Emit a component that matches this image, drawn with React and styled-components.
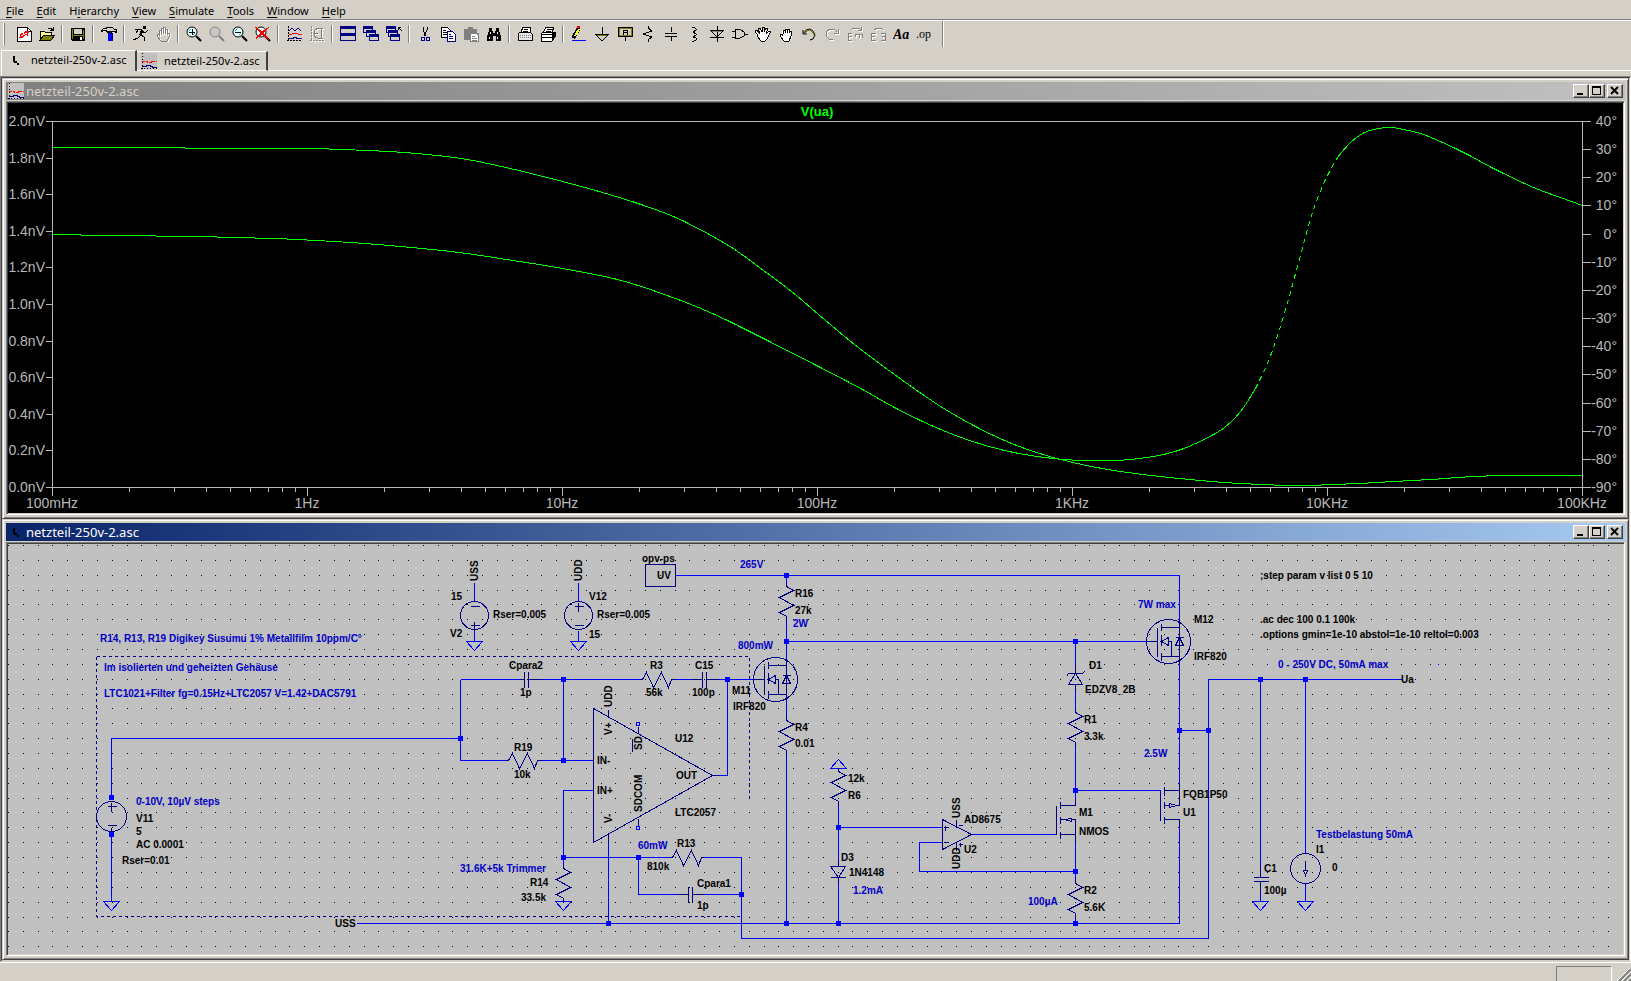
import React from 'react';
import styled, { createGlobalStyle, css } from 'styled-components';

const GlobalStyle = createGlobalStyle`
  * {
    box-sizing: border-box;
  }

  body {
    margin: 0;
    background: #d4d0c8;
    font-family: 'Noto Sans', 'Open Sans', sans-serif;
    font-size: 11px;
    color: #000;
  }
`;

// Frame
const Page = styled.div`
  display: flex;
  flex-direction: column;
  min-height: 100vh;
`;

const MenuBar = styled.nav`
  display: flex;
  gap: 13px;
  height: 21px;
  padding: 2px 6px 0;
  border-bottom: 1px solid #fff;
  box-shadow: inset 0 -1px 0 #808080;
`;

const MenuItem = styled.button`
  height: 17px;
  padding: 0;
  border: 0;
  background: none;
  font: inherit;
  line-height: 17px;

  u {
    text-underline-offset: 2px;
  }
`;

const ToolBar = styled.div`
  display: flex;
  align-items: center;
  height: 28px;
  padding: 0 0 2px 3px;
`;

const Grip = styled.span`
  width: 2px;
  height: 22px;
  margin-right: 7px;
  border-left: 1px solid #fff;
  border-right: 1px solid #808080;
`;

const ToolButton = styled.button`
  display: flex;
  align-items: center;
  justify-content: center;
  width: 23px;
  height: 22px;
  padding: 0;
  border: 0;
  background: none;
`;

const Separator = styled.span`
  width: 2px;
  height: 18px;
  margin: 0 3px;
  border-left: 1px solid #808080;
  border-right: 1px solid #fff;
`;

const ToolBarEnd = styled.span`
  align-self: stretch;
  width: 2px;
  margin-left: 7px;
  border-left: 1px solid #808080;
  border-right: 1px solid #fff;
`;

const TabStrip = styled.div`
  display: flex;
  align-items: flex-end;
  height: 27px;
  padding: 1px 0 5px;
  margin-left: 1px;
  border-left: 1px solid #fff;
`;

const Tab = styled.button`
  display: flex;
  align-items: center;
  gap: 7px;
  width: 131px;
  height: 20px;
  padding: 0 0 1px 4px;
  border: 0;
  border-top: 1px solid #fff;
  border-right: 2px solid #404040;
  border-bottom: 1px solid #fff;
  background: none;
  font: inherit;

  ${({ $active }) =>
    $active &&
    css`
      width: 135px;
      height: 21px;
      padding: 0 0 3px 6px;
      border-bottom: 0;
    `}
`;

const TabFiller = styled.span`
  flex: 1;
  border-bottom: 1px solid #fff;
`;

const Workspace = styled.main`
  flex: 1;
  display: flex;
  flex-direction: column;
  padding: 1px;
  border: 1px solid;
  border-color: #808080 #fff #d4d0c8 #808080;
  box-shadow: inset 1px 1px 0 #404040;
`;

// Child windows
const ChildWindow = styled.section`
  flex: 1;
  display: flex;
  flex-direction: column;
  padding: 3px;
  border: 1px solid;
  border-color: #d4d0c8 #404040 #404040 #d4d0c8;
  box-shadow: inset 1px 1px 0 #fff, inset -1px -1px 0 #808080;
  background: #d4d0c8;
`;

const TitleBar = styled.header`
  display: flex;
  align-items: center;
  gap: 2px;
  height: 18px;
  padding: 0 2px;
  margin-bottom: 1px;
  color: ${({ $active }) => ($active ? '#fff' : '#d4d0c8')};
  background: ${({ $active }) =>
    $active
      ? 'linear-gradient(to right, #0a246a, #a6caf0)'
      : 'linear-gradient(to right, #808080, #c0c0c0)'};
`;

const TitleText = styled.h2`
  flex: 1;
  margin: 0;
  font-size: 13px;
  font-weight: 400;
  line-height: 18px;
`;

const CaptionButton = styled.button`
  display: flex;
  align-items: center;
  justify-content: center;
  width: 16px;
  height: 14px;
  padding: 0;
  margin-left: ${({ $spaced }) => ($spaced ? '0' : '-2px')};
  border: 1px solid;
  border-color: #fff #404040 #404040 #fff;
  box-shadow: inset -1px -1px 0 #808080;
  background: #d4d0c8;
`;

const WindowBody = styled.div`
  flex: 1;
  display: flex;
  padding: 1px;
  border: 1px solid;
  border-color: #808080 #fff #fff #808080;
  background: ${({ $color }) => $color};
  box-shadow: inset 1px 1px 0 #404040, inset -1px -1px 0 #d4d0c8;
`;

const Drawing = styled.svg`
  display: block;
  width: 100%;
  height: auto;
  shape-rendering: crispEdges;
`;

const StatusBar = styled.footer`
  display: flex;
  justify-content: flex-end;
  height: 20px;
  border-top: 1px solid #fff;
  padding: 3px 0 0;
`;

const StatusCell = styled.span`
  width: 56px;
  margin-right: 5px;
  border: 1px solid;
  border-color: #808080 #fff #d4d0c8 #808080;
`;

// Text in the drawings
const AxisText = styled.text`
  font-family: 'Liberation Sans', Arial, sans-serif;
  font-size: 14px;
  fill: #b8b8b8;
`;

const TraceName = styled(AxisText)`
  font-size: 13px;
  font-weight: 700;
  fill: #00ff00;
`;

const Label = styled.text`
  font-family: 'Liberation Sans', Arial, sans-serif;
  font-size: 10px;
  font-weight: 700;
  fill: ${({ $note }) => ($note ? '#0000c8' : '#000')};
`;

const Svg16 = styled.svg`
  display: block;
  flex: none;
  fill: none;
  stroke: #000;
  shape-rendering: crispEdges;
`;

const Icon = ({ children, ...rest }) => (
  <Svg16 width="16" height="16" viewBox="0 0 16 16" aria-hidden="true" {...rest}>
    {children}
  </Svg16>
);

const Fill = ({ d, c = '#000' }) => <path d={d} fill={c} stroke="none" />;

// Grey glyph with a white shadow, for commands that are not available
const Disabled = ({ children }) => (
  <>
    <g stroke="#fff" transform="translate(1 1)">{children}</g>
    <g stroke="#808080">{children}</g>
  </>
);

const Lens = ({ grey }) => (
  <g shapeRendering="auto">
    <circle cx="6" cy="6" r="5" fill={grey ? '#c8c8c8' : '#e8ffff'} stroke={grey ? '#808080' : '#000'} />
    <path d="M10 10L15 15" strokeWidth="2" stroke={grey ? '#808080' : '#000'} />
    {!grey && <path d="M3 5L5 3M7 9L9 7" stroke="#00c8c8" />}
  </g>
);

const CascadeBox = ({ x, y }) => (
  <g>
    <Fill d={`M${x} ${y}h10v7h-10z`} c="#000080" />
    <Fill d={`M${x + 1} ${y + 3}h8v3h-8z`} c="#d4d0c8" />
  </g>
);

const waveLines = (
  <>
    <path d="M2 0V14M1 14H16" strokeDasharray="2 1" />
    <path d="M3 5L6 2L9 5L12 2L15 5" stroke="#000080" />
    <path d="M3 8H6L8 7H10L12 8H16" stroke="#f00" />
    <path d="M3 12H7V11H10V12H16" stroke="#000080" />
  </>
);

const icons = {
  'New Schematic': (
    <>
      <Fill d="M1 1h11l3 3v11H1z" c="#fff" />
      <path d="M1 1H11L15 5V15H1zM11 1V5H15" />
      <Fill d="M3 12L5 7L8 8L9 5L13 5L12 10L9 9L7 12z" c="#f00" />
      <path d="M5 10L11 7" stroke="#fff" />
    </>
  ),
  Open: (
    <>
      <Fill d="M1 5h4l1 1h6v3H5l-4 5z" c="#ffff80" />
      <Fill d="M5 9h11l-4 5H1z" c="#808000" />
      <path d="M1 14V5H5L6 6H12V9M1 14L5 9H16L12 14zM9 3L11 2L14 4M14 1V4H11" />
    </>
  ),
  Save: (
    <>
      <Fill d="M1 2h14v13H2l-1-1z" />
      <Fill d="M2 3h1v10h-1zM13 4h1v9h-1zM3 9h10v1H3z" c="#808000" />
      <Fill d="M4 3h8v5H4z" c="#d4d0c8" />
      <Fill d="M10 11h2v3h-2z" c="#fff" />
    </>
  ),
  'Control Panel': (
    <>
      <Fill d="M0 4l2-2h2l1-1h6l2 2h3v4h-2l-1-1h-2l-1 1H6L5 5H2L1 6H0z" />
      <Fill d="M2 3h3l1-1h5l2 2h2v1h-2l-2 0H6L5 4H2z" c="#d4d0c8" />
      <Fill d="M7 7h4v8H7z" c="#0000ff" />
      <path d="M11 7V15M7 7V10" stroke="#000080" />
    </>
  ),
  Run: (
    <>
      <Fill d="M11 0h3v3h-3z" />
      <path d="M3 3H8L11 5L9 9L12 11V15M9 9L6 12L1 14M10 5L13 7L16 4M6 4L4 7" />
      <path d="M10 4L8 9" strokeWidth="2" />
    </>
  ),
  Halt: (
    <Disabled>
      <path d="M4 10V4H6V9V2H8V8V1H10V8V3H12V9L13 7H14V11L12 15H6L2 10V8H4" />
    </Disabled>
  ),
  'Zoom to Area': (
    <>
      <Lens />
      <path d="M3 6H9M6 3V9" />
    </>
  ),
  Pan: <Lens grey />,
  'Zoom Back': (
    <>
      <Lens />
      <path d="M3 6H9" />
    </>
  ),
  'Zoom Full Extents': (
    <>
      <Lens />
      <path d="M0 1L14 14M14 1L1 13" stroke="#f00" />
      <path d="M1 1L13 12M12 2L1 12" stroke="#f00" />
    </>
  ),
  'Autorange y-axis': waveLines,
  'Autorange traces': (
    <Disabled>
      <path d="M2 0V14M1 14H16" strokeDasharray="2 1" />
      <path d="M14 2H9L5 5V10L8 12H14M12 2V12M4 7H9" />
    </Disabled>
  ),
  Tile: (
    <>
      <Fill d="M0 0h16v15H0z" c="#000080" />
      <Fill d="M1 3h14v4H1zM1 10h14v4H1z" c="#d4d0c8" />
    </>
  ),
  Cascade: (
    <>
      <CascadeBox x={0} y={0} />
      <CascadeBox x={3} y={4} />
      <CascadeBox x={6} y={8} />
    </>
  ),
  'Close All': (
    <>
      <CascadeBox x={0} y={0} />
      <CascadeBox x={2} y={4} />
      <CascadeBox x={4} y={8} />
      <path d="M16 5L12 1M12 4V1H15" />
    </>
  ),
  Cut: (
    <>
      <path d="M6 1V4L9 10M10 1V4L7 10" />
      <path d="M4 11H7V14H4zM9 11H12V14H9z" stroke="#000080" />
    </>
  ),
  Copy: (
    <>
      <Fill d="M1 1h7l2 2v8H1z" c="#fff" />
      <path d="M1 1H7L10 4V11H1zM3 4H6M3 6H8M3 8H8" />
      <Fill d="M7 5h5l3 3v7H7z" c="#fff" />
      <path d="M7 5H12L15 8V15H7zM9 8H11M9 10H13M9 12H13" stroke="#000080" />
    </>
  ),
  Paste: (
    <>
      <Fill d="M1 3h4V1h5v2h4v4h2v9H7v-2H1z" c="#808080" />
      <Fill d="M8 8h5l2 2v5H8z" c="#fff" />
      <path d="M9 10H12M9 12H14M9 14H14" stroke="#808080" />
    </>
  ),
  Find: (
    <>
      <Fill d="M3 2h3v3h1v2h2V5h1V2h3v3l2 5v5h-5v-5H7v5H1v-5l2-5z" />
      <path d="M4 6V8M11 6V8M3 11V13M11 11V13" stroke="#fff" />
    </>
  ),
  Print: (
    <>
      <Fill d="M4 1h9v6H4z" c="#fff" />
      <path d="M4 6L6 1H13V6M7 3H11M6 5H11" />
      <Fill d="M1 7l2-1h11l1 2v6H1z" c="#e8e8e8" />
      <path d="M3 9H14M3 11H14" stroke="#808080" strokeDasharray="1 1" />
      <path d="M1 8L3 6H13L15 8V14H1z" />
    </>
  ),
  'Print Setup': (
    <>
      <Fill d="M5 1h8l-2 6H3z" c="#fff" />
      <path d="M3 7L6 1H14L12 6M7 3H12M6 5H11" />
      <Fill d="M1 8l3-2h11v5l-3 4H1z" c="#fff" />
      <path d="M1 8L3 6H15V11L12 15H1zM1 8H12V15M12 8L15 6M1 11H12" />
      <path d="M12 10L15 8M12 13L15 10" strokeWidth="2" />
    </>
  ),
  Wire: (
    <>
      <path d="M2 12L8 2" strokeWidth="4" />
      <path d="M4 10L8 3" stroke="#ffff00" strokeWidth="2" />
      <Fill d="M6 0h3v2H6z" c="#f00" />
      <path d="M1 14H15" stroke="#0000ff" />
    </>
  ),
  Ground: (
    <>
      <path d="M8 1V8M1 8H15L8 15z" />
      <path d="M3 9H13" stroke="#808000" />
    </>
  ),
  'Label Net': (
    <>
      <path d="M1 1H15V10H1zM8 10V15" />
      <path d="M2 2H14V9H2z" stroke="#808000" />
      <path d="M6 9V4H10V9M6 6H10" />
    </>
  ),
  Resistor: <path d="M8 0V2L12 5L3 8L12 11L8 14V16" />,
  Capacitor: (
    <>
      <path d="M8 1V6M8 10V15" />
      <path d="M2 7H14M2 10H14" />
    </>
  ),
  Inductor: <path d="M6 1H8L10 3V4L7 6L10 8V9L7 11L10 12V14L8 15H6" />,
  Diode: (
    <>
      <path d="M8 0V16M1 4H15L8 11zM1 11H15" />
      <path d="M3 5H13" stroke="#808080" />
    </>
  ),
  Component: <path d="M3 3H8L12 6V10L8 12H3zM0 5H3M0 11H3M12 8H16" />,
  Move: (
    <>
      <Fill d="M1 4h2l2 3V2h2l1 4 2-5h2l-1 5 3-2 2 1-4 7-3 4H6L1 9z" c="#fff" />
      <path d="M1 4H2L5 8L3 2H5L7 6L7 1H9L9 6L11 2H13L11 8L14 5H16L12 13L10 15H6L2 10V8L0 6z" />
    </>
  ),
  Drag: (
    <>
      <Fill d="M4 4h9v3h1v5l-3 4H6L2 10V8h2z" c="#fff" />
      <path d="M5 8V4H7V7V3H9V7V3H11V7V5H13V10L11 15H6L2 10V8H4L5 10" />
    </>
  ),
  Undo: (
    <>
      <path d="M2 4V8H6M3 7L5 4L9 3L12 5L14 9L12 13L9 14" shapeRendering="auto" />
      <path d="M4 7L6 5L9 4L12 7L13 9" stroke="#808000" shapeRendering="auto" />
    </>
  ),
  Redo: (
    <Disabled>
      <path d="M14 3V7H10M13 6L10 3H6L2 6V10L5 13H9" />
    </Disabled>
  ),
  Mirror: (
    <Disabled>
      <path d="M4 4L6 2H12L14 4M14 1V4H11M5 7H1V14H5M1 10H5M8 8V11M8 8H15V12M12 8V12" />
    </Disabled>
  ),
  Rotate: (
    <Disabled>
      <path d="M4 4L7 2H11L13 4M6 7H1V14H6M1 10H5M11 7H15V14H11M12 10H15" />
    </Disabled>
  ),
  Text: (
    <text x="0" y="13" fill="#000" stroke="none" fontFamily="Liberation Serif, serif" fontSize="14" fontStyle="italic" fontWeight="700">
      Aa
    </text>
  ),
  'SPICE Directive': (
    <text x="0" y="12" fill="#000" stroke="none" fontFamily="Liberation Serif, serif" fontSize="12">
      .op
    </text>
  ),
};

const toolGroups = [
  ['New Schematic', 'Open'],
  ['Save'],
  ['Control Panel'],
  ['Run', 'Halt'],
  ['Zoom to Area', 'Pan', 'Zoom Back', 'Zoom Full Extents'],
  ['Autorange y-axis', 'Autorange traces'],
  ['Tile', 'Cascade', 'Close All'],
  ['Cut', 'Copy', 'Paste', 'Find'],
  ['Print', 'Print Setup'],
  ['Wire', 'Ground', 'Label Net', 'Resistor', 'Capacitor', 'Inductor', 'Diode', 'Component', 'Move', 'Drag', 'Undo', 'Redo', 'Mirror', 'Rotate', 'Text', 'SPICE Directive'],
];

const menus = [
  ['', 'F', 'ile'],
  ['', 'E', 'dit'],
  ['H', 'i', 'erarchy'],
  ['', 'V', 'iew'],
  ['', 'S', 'imulate'],
  ['', 'T', 'ools'],
  ['', 'W', 'indow'],
  ['', 'H', 'elp'],
];

const SchematicIcon = () => (
  <Icon>
    <Fill d="M5 4h2v6H5zM6 9h3v2H6zM9 11h2v2H9z" />
  </Icon>
);

const PlotIcon = () => (
  <Icon>
    <Fill d="M0 0h16v16H0z" c="#c0c0c0" />
    <path d="M1 0V16M0 15H16" strokeDasharray="1 2" />
    <path d="M1 8H6V9H10V8H16" stroke="#f00" strokeDasharray="3 1" />
    <path d="M1 13H5V12H9V13H11V14H16" stroke="#000080" />
  </Icon>
);

// Waveform viewer
const PLOT = { left: 44, right: 1574, top: 18, bottom: 384 };
const DECADE = 255;
const freqs = ['100mHz', '1Hz', '10Hz', '100Hz', '1KHz', '10KHz', '100KHz'];
const volts = ['2.0nV', '1.8nV', '1.6nV', '1.4nV', '1.2nV', '1.0nV', '0.8nV', '0.6nV', '0.4nV', '0.2nV', '0.0nV'];
const degrees = [40, 30, 20, 10, 0, -10, -20, -30, -40, -50, -60, -70, -80, -90];

const magnitude = [
  [44, 44], [283, 45], [332, 46], [380, 48], [419, 51], [459, 56], [506, 66], [554, 78], [601, 91],
  [644, 105], [676, 118], [720, 142], [751, 164], [783, 188], [810, 211], [846, 241],
  [886, 271], [929, 301], [965, 322], [996, 337], [1028, 349], [1060, 358], [1099, 366], [1143, 372],
  [1192, 377], [1232, 380], [1289, 382], [1349, 380], [1385, 378], [1422, 376],
  [1465, 373], [1499, 372], [1574, 372],
];

const phaseLow = [
  [44, 131], [100, 132], [184, 133], [265, 135], [308, 137], [356, 140], [403, 144], [451, 149],
  [498, 156], [554, 165], [609, 176], [656, 191], [704, 210], [751, 233], [810, 263], [854, 286],
  [886, 304], [925, 323], [961, 337], [996, 347], [1036, 354], [1071, 357], [1107, 357], [1131, 355],
  [1155, 351], [1178, 344], [1207, 330], [1222, 319], [1235, 304], [1247, 285],
];

const phaseSteep = [
  [1247, 285], [1259, 260], [1269, 232], [1279, 199], [1289, 163], [1299, 126], [1306, 103],
  [1317, 76], [1329, 54],
];

const phaseHigh = [
  [1329, 54], [1342, 39], [1354, 30], [1365, 26], [1382, 24], [1395, 26], [1412, 30], [1432, 38],
  [1459, 51], [1485, 65], [1525, 84], [1552, 94], [1574, 102],
];

// Catmull-Rom through the points
const smooth = (pts) => {
  let d = `M${pts[0].join(' ')}`;
  for (let i = 0; i < pts.length - 1; i++) {
    const a = pts[i - 1] || pts[i];
    const b = pts[i];
    const c = pts[i + 1];
    const e = pts[i + 2] || c;
    d += `C${b[0] + (c[0] - a[0]) / 6} ${b[1] + (c[1] - a[1]) / 6} ${c[0] - (e[0] - b[0]) / 6} ${c[1] - (e[1] - b[1]) / 6} ${c[0]} ${c[1]}`;
  }
  return d;
};

const axisPath = () => {
  const { left, right, top, bottom } = PLOT;
  let d = `M${left} ${top}V${bottom + 8}M${right} ${top}V${bottom + 8}M${left} ${top}H${right}M${left} ${bottom}H${right}`;
  volts.forEach((_, i) => {
    d += `M${left - 7} ${Math.round(top + (i * (bottom - top)) / 10)}h7`;
  });
  degrees.forEach((_, i) => {
    d += `M${right} ${Math.round(top + (i * (bottom - top)) / 13)}h8`;
  });
  freqs.forEach((_, i) => {
    const x = left + i * DECADE;
    d += `M${x} ${bottom}v8`;
    if (i < freqs.length - 1) {
      for (let n = 2; n < 10; n++) {
        d += `M${Math.round(x + Math.log10(n) * DECADE)} ${bottom}v4`;
      }
    }
  });
  return d;
};

// Strokes run through pixel centres
const PIXEL_CENTRE = 'translate(0.5 0.5)';

const Waveform = () => (
  <Drawing viewBox="0 0 1615 410" role="img" aria-label="V(ua) over frequency">
    <path d={axisPath()} fill="none" stroke="#b8b8b8" transform={PIXEL_CENTRE} />
    <TraceName x="809" y="13" textAnchor="middle">V(ua)</TraceName>
    {volts.map((v, i) => (
      <AxisText key={v} x="37" y={Math.round(23 + i * 36.6)} textAnchor="end">{v}</AxisText>
    ))}
    {degrees.map((v, i) => (
      <AxisText key={v} x="1609" y={Math.round(23 + (i * 366) / 13)} textAnchor="end">{v}°</AxisText>
    ))}
    {freqs.map((f, i) => (
      <AxisText key={f} x={44 + i * DECADE} y="405" textAnchor="middle">{f}</AxisText>
    ))}
    <g fill="none" stroke="#00ff00" transform={PIXEL_CENTRE}>
      <path d={smooth(magnitude)} />
      <path d={smooth(phaseLow)} />
      <path d={smooth(phaseSteep)} strokeDasharray="5 4" />
      <path d={smooth(phaseHigh)} />
    </g>
  </Drawing>
);

// Schematic
const SHEET = { x: 8, y: 544, width: 1615, height: 410 };

const gridPath = () => {
  let d = '';
  for (let row = 0; row < 28; row++) {
    for (let col = 0; col < 109; col++) {
      d += `M${Math.round(8 + col * 14.815)} ${Math.round(545 + row * 14.86)}h1v1h-1z`;
    }
  }
  return d;
};

const wires = [
  'M675 575H1179V783',
  'M786 575V586M786 616V720M786 750V923',
  'M786 641H1146M1075 641V673M1075 684V712M1075 742V805',
  'M111 797V738H460M460 679V760H508M460 679H524M528 679H642M671 679H702M706 679H753',
  'M537 760H593M563 679V760M727 679V775H712',
  'M593 790H563V868M563 857H672M701 857H741M638 857V894H688M692 894H741',
  'M608 842V923M356 923H1179V819M741 857V938H1208V679H1401M1179 730H1208',
  'M838 768V771M838 801V866M838 877V923M838 827H942',
  'M971 834H1056M942 842H919V871H1075M1075 834V883M1075 913V923M1075 790H1160',
  'M1260 679V877M1260 881V901M1305 679V853M1305 883V901M111 834V901',
  'M474 582V601M474 630V641M578 582V601M578 630V641',
];

const joints = [
  [786, 575], [786, 641], [1075, 641], [563, 679], [727, 679], [460, 738], [563, 760], [563, 857],
  [638, 857], [741, 894], [608, 923], [786, 923], [838, 923], [1075, 923], [1260, 679], [1305, 679],
  [1179, 730], [1208, 730], [838, 827], [1075, 790], [1075, 871], [111, 797], [111, 834],
];

const grounds = [[474, 641], [578, 641], [563, 901], [111, 901], [1260, 901], [1305, 901]];
const resistorsV = [[786, 586], [786, 720], [1075, 712], [1075, 883], [838, 771], [563, 868]];
const resistorsH = [[508, 760], [642, 679], [672, 857]];
const powerFets = [[786, 679], [1179, 641]];

const symbols = [
  // opv-ps port
  'M645 564H675V586H645z',
  // sources
  'M470 606H479M470 625H479M474 621V630',
  'M574 606H583M578 602V611M574 625H583',
  'M107 806H116M111 802V811M107 825H116M111 827V834',
  'M1305 860V870M1303 870H1307L1305 875z',
  // capacitors
  'M524 671V687M528 671V687M519 679H524M528 679H541',
  'M702 671V687M706 671V687M690 679H702M706 679H718',
  'M688 886V902M692 886V902M677 894H688M692 894H704',
  'M1253 877H1268M1253 881H1268M1260 865V877M1260 881V893',
  // LTC2057
  'M593 708V842L712 775zM608 709V716M608 834V842M638 726V733M638 818V825M632 738V751M712 775H718',
  // AD8675
  'M942 819V849L971 834zM956 819V827M956 842V850M943 827H948M945 825V830M943 842H948M958 825H962M958 844H962M960 842V846',
  // diodes
  'M830 866H845L838 877zM830 877H845M838 859V866M838 877V884',
  'M1068 684H1082L1075 673zM1066 676L1068 673H1082L1084 671M1075 664V673M1075 684V691',
  // M1
  'M1056 805V834M1060 801V808M1060 816V823M1060 831V838M1060 805H1075V797M1060 819H1064L1071 818V821L1064 819M1071 819H1075V842M1060 834H1075',
  // U1
  'M1160 790V820M1164 786V795M1164 801V808M1164 816V823M1164 790H1179V805M1164 805H1169V803L1176 805L1169 807V805M1176 805H1179M1164 819H1179V827M1179 783V790',
];

const labels = [
  [451, 600, '15'], [450, 637, 'V2'], [493, 618, 'Rser=0.005'],
  [589, 600, 'V12'], [597, 618, 'Rser=0.005'], [589, 638, '15'],
  [642, 562, 'opv-ps'], [657, 579, 'UV'],
  [795, 597, 'R16'], [795, 614, '27k'], [732, 694, 'M11'], [733, 710, 'IRF820'],
  [795, 731, 'R4'], [795, 747, '0.01'],
  [509, 669, 'Cpara2'], [520, 696, '1p'], [650, 669, 'R3'], [646, 696, '56k'], [695, 669, 'C15'], [692, 696, '100p'],
  [514, 751, 'R19'], [514, 778, '10k'],
  [597, 764, 'IN-'], [597, 794, 'IN+'], [676, 779, 'OUT'], [675, 742, 'U12'], [675, 816, 'LTC2057'],
  [677, 847, 'R13'], [647, 870, '810k'], [697, 887, 'Cpara1'], [697, 909, '1p'],
  [530, 886, 'R14'], [521, 901, '33.5k'], [335, 927, 'USS'],
  [136, 822, 'V11'], [136, 835, '5'], [136, 848, 'AC 0.0001'], [122, 864, 'Rser=0.01'],
  [848, 782, '12k'], [848, 799, 'R6'], [841, 861, 'D3'], [849, 876, '1N4148'],
  [964, 823, 'AD8675'], [964, 853, 'U2'], [1079, 816, 'M1'], [1079, 835, 'NMOS'],
  [1084, 894, 'R2'], [1084, 911, '5.6K'], [1084, 723, 'R1'], [1084, 740, '3.3k'],
  [1089, 669, 'D1'], [1085, 693, 'EDZV8_2B'],
  [1194, 623, 'M12'], [1194, 660, 'IRF820'], [1183, 798, 'FQB1P50'], [1183, 816, 'U1'],
  [1264, 872, 'C1'], [1264, 894, '100µ'], [1316, 853, 'I1'], [1332, 871, '0'], [1401, 683, 'Ua'],
  [1260, 579, ';step param v list 0 5 10'], [1260, 623, '.ac dec 100 0.1 100k'],
  [1260, 638, '.options gmin=1e-10 abstol=1e-10 reltol=0.003'],
];

const notes = [
  [100, 642, 'R14, R13, R19 Digikey Susumu 1% Metallfilm 10ppm/C°'],
  [104, 671, 'Im isolierten und geheizten Gehäuse'],
  [104, 697, 'LTC1021+Filter fg=0.15Hz+LTC2057 V=1.42+DAC5791'],
  [136, 805, '0-10V, 10µV steps'],
  [460, 872, '31.6K+5k Trimmer'], [638, 849, '60mW'], [740, 568, '265V'], [793, 627, '2W'], [738, 649, '800mW'],
  [853, 894, '1.2mA'], [1028, 905, '100µA'], [1138, 608, '7W max'], [1144, 757, '2.5W'],
  [1278, 668, '0 - 250V DC, 50mA max'], [1316, 838, 'Testbelastung 50mA'],
];

const verticalLabels = [
  [478, 581, 'USS'], [582, 581, 'UDD'], [612, 707, 'UDD'], [612, 735, 'V+'], [612, 823, 'V-'],
  [642, 750, 'SD'], [642, 812, 'SDCOM'], [960, 818, 'USS'], [960, 869, 'UDD'],
];

const Schematic = () => (
  <Drawing viewBox={`${SHEET.x} ${SHEET.y} ${SHEET.width} ${SHEET.height}`} role="img" aria-label="Schematic">
    <path d={gridPath()} fill="#000" />
    <g fill="none" stroke="#0000ff" transform={PIXEL_CENTRE}>
      <path d={wires.join('')} />
      {grounds.map(([x, y]) => (
        <path key={`${x}-${y}`} d={`M${x - 8} ${y}h16l-8 9z`} />
      ))}
      <path d="M830 768H846L838 759z" />
      <path d="M636 722h3v3h-3zM636 826h3v3h-3z" />
    </g>
    <g fill="none" stroke="#000080" transform={PIXEL_CENTRE}>
      <path d="M96 656H749V797M96 656V916H741" strokeDasharray="3 3" />
      <path d={symbols.join('')} />
      {resistorsV.map(([x, y]) => (
        <path key={`${x}-${y}`} d={`M${x} ${y - 4}v4l7 4l-14 7l14 8l-14 7l7 4v4`} />
      ))}
      {resistorsH.map(([x, y]) => (
        <path key={`${x}-${y}`} d={`M${x - 3} ${y}h3l4 -7l7 15l8 -15l7 15l3 -8h3`} />
      ))}
      {powerFets.map(([x, y]) => (
        <g key={x}>
          <circle cx={x - 11} cy={y} r="22" />
          <path
            d={`M${x - 33} ${y}H${x - 22}M${x - 22} ${y - 14}V${y + 15}M${x - 18} ${y - 18}v7M${x - 18} ${y - 7}v11M${x - 18} ${y + 11}v8
              M${x - 18} ${y - 14}H${x}M${x - 18} ${y + 15}H${x}M${x - 11} ${y}H${x - 8}V${y + 15}M${x - 18} ${y}L${x - 11} ${y - 4}V${y + 4}z
              M${x} ${y - 22}V${y + 22}M${x - 4} ${y - 4}h8M${x - 4} ${y + 4}h8l-4 -8z`}
          />
        </g>
      ))}
      <circle cx="474" cy="615" r="14" />
      <circle cx="578" cy="615" r="14" />
      <circle cx="111" cy="816" r="15" />
      <circle cx="1305" cy="868" r="15" />
    </g>
    {joints.map(([x, y]) => (
      <rect key={`${x}-${y}`} x={x - 2} y={y - 2} width="5" height="5" fill="#0000ff" />
    ))}
    <rect x="1438" y="664" width="1" height="1" fill="#0000ff" />
    {labels.map(([x, y, text]) => (
      <Label key={`${x}-${y}`} x={x} y={y}>{text}</Label>
    ))}
    {notes.map(([x, y, text]) => (
      <Label key={`${x}-${y}`} x={x} y={y} $note>{text}</Label>
    ))}
    {verticalLabels.map(([x, y, text]) => (
      <Label key={`${x}-${y}`} transform={`translate(${x} ${y}) rotate(-90)`}>{text}</Label>
    ))}
  </Drawing>
);

const CaptionButtons = () => (
  <>
    <CaptionButton aria-label="Minimize" $spaced>
      <svg width="12" height="10" viewBox="0 0 12 10"><path d="M2 7h6v2H2z" /></svg>
    </CaptionButton>
    <CaptionButton aria-label="Maximize">
      <svg width="12" height="10" viewBox="0 0 12 10"><path fillRule="evenodd" d="M1 0h9v9H1zM2 2h7v6H2z" /></svg>
    </CaptionButton>
    <CaptionButton aria-label="Close" $spaced>
      <svg width="12" height="10" viewBox="0 0 12 10"><path d="M2 1L9 8M9 1L2 8" stroke="#000" strokeWidth="2" /></svg>
    </CaptionButton>
  </>
);

const fileName = 'netzteil-250v-2.asc';

function App() {
  return (
    <Page>
      <GlobalStyle />
      <MenuBar>
        {menus.map(([before, key, after]) => (
          <MenuItem key={key + after}>{before}<u>{key}</u>{after}</MenuItem>
        ))}
      </MenuBar>

      <ToolBar role="toolbar">
        <Grip />
        {toolGroups.map((group, i) => (
          <React.Fragment key={group[0]}>
            {i > 0 && <Separator />}
            {group.map((name) => (
              <ToolButton key={name} aria-label={name}>
                <Icon>{icons[name]}</Icon>
              </ToolButton>
            ))}
          </React.Fragment>
        ))}
        <ToolBarEnd />
      </ToolBar>

      <TabStrip role="tablist">
        <Tab role="tab" aria-selected="true" $active><SchematicIcon />{fileName}</Tab>
        <Tab role="tab" aria-selected="false"><PlotIcon />{fileName}</Tab>
        <TabFiller />
      </TabStrip>

      <Workspace>
        <ChildWindow>
          <TitleBar>
            <PlotIcon />
            <TitleText>{fileName}</TitleText>
            <CaptionButtons />
          </TitleBar>
          <WindowBody $color="#000">
            <Waveform />
          </WindowBody>
        </ChildWindow>

        <ChildWindow>
          <TitleBar $active>
            <SchematicIcon />
            <TitleText>{fileName}</TitleText>
            <CaptionButtons />
          </TitleBar>
          <WindowBody $color="#c0c0c0">
            <Schematic />
          </WindowBody>
        </ChildWindow>
      </Workspace>

      <StatusBar>
        <StatusCell />
        <svg width="14" height="16" viewBox="0 0 14 16" aria-hidden="true">
          <path d="M1 16L14 3M6 16L14 8M11 16L14 13" stroke="#808080" strokeWidth="2" />
          <path d="M0 15L13 2M5 15L14 6M10 15L14 11" stroke="#fff" />
        </svg>
      </StatusBar>
    </Page>
  );
}

export default App;
